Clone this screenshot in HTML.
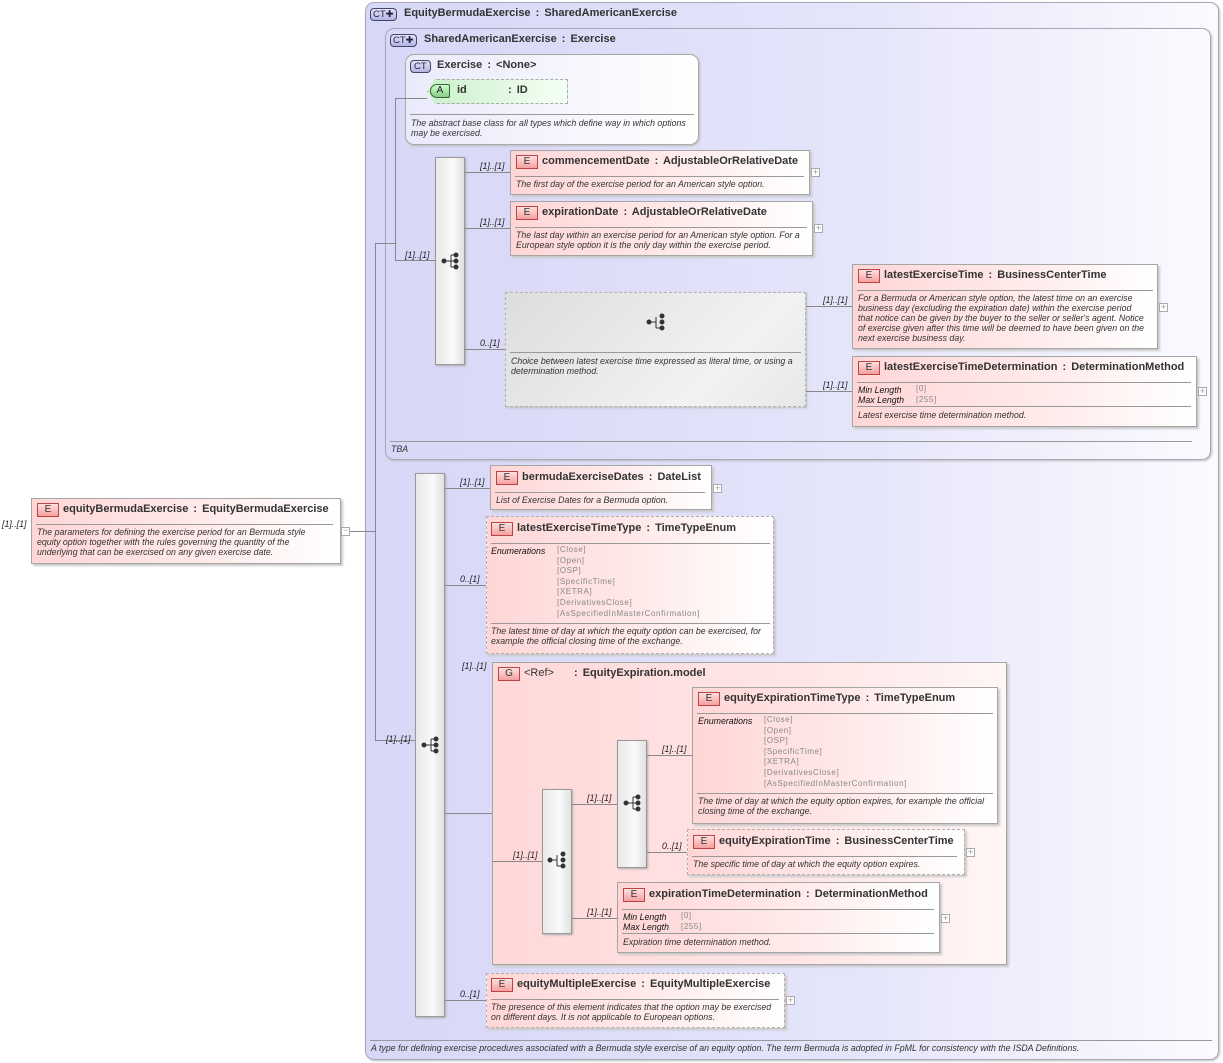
<!DOCTYPE html>
<html><head><meta charset="utf-8"><style>
*{margin:0;padding:0;box-sizing:border-box}
body{width:1223px;height:1063px;background:#fff;position:relative;overflow:hidden;font-family:"Liberation Sans",Arial,sans-serif;color:#222}
.a{position:absolute}
.ct{position:absolute;border:1px solid #a8a8b8;border-radius:9px;background:linear-gradient(90deg,#d7d7f7 0%,#e4e4fa 55%,#fafaff 100%);box-shadow:1px 1px 2px #bbb}
.ex{position:absolute;border:1px solid #aaa;border-radius:9px;background:linear-gradient(90deg,#eaeafb,#fff);box-shadow:1px 1px 2px #bbb}
.el{position:absolute;border:1px solid #a5a5a5;background:linear-gradient(90deg,#ffd6d6 0%,#ffe8e8 50%,#fff 100%);box-shadow:2px 2px 2px #c8c8c8}
.dash{border:1px dashed #b0b0b0}
.t{position:absolute;font-size:11px;font-weight:bold;white-space:nowrap;color:#333;word-spacing:2px}
.d{position:absolute;font-size:8.8px;font-style:italic;line-height:10px;color:#333;white-space:nowrap}
.hr{position:absolute;height:1px;background:#999}
.eb{position:absolute;width:22px;height:14px;border:1px solid #b44;background:linear-gradient(180deg,#ffe0e0,#f4a0a0);font-size:10px;text-align:center;line-height:12px;color:#333}
.ctb{position:absolute;width:27px;height:13px;border:1px solid #446;border-radius:4px;background:linear-gradient(#e4e4fa,#b4b4e4);font-size:9.5px;line-height:11px;padding-left:2px;color:#224}
.ln{position:absolute;background:#888}
.m{position:absolute;font-size:8.8px;font-style:italic;color:#222;white-space:nowrap}
.seq{position:absolute;border:1px solid #999;background:linear-gradient(90deg,#e8e8e8,#fafafa 60%,#e0e0e0);box-shadow:1px 1px 2px #aaa}
.pl{position:absolute;width:9px;height:9px;border:1px solid #aaa;background:#fff;font-size:9px;line-height:6px;text-align:center;color:#999}
.en{position:absolute;font-size:8px;color:#888;line-height:10.6px;letter-spacing:.6px;white-space:nowrap}
.k{position:absolute;font-size:8.8px;font-style:italic;color:#111;line-height:10px;white-space:nowrap}
</style></head><body>

<div class="ct" style="left:365px;top:2px;width:854px;height:1058px"></div>
<div class="ctb" style="left:370px;top:8px">CT✚</div>
<div class="t" style="left:404px;top:7px">EquityBermudaExercise : SharedAmericanExercise</div>
<div class="hr" style="left:370px;top:1040px;width:842px"></div>
<div class="d" style="left:371px;top:1043px">A type for defining exercise procedures associated with a Bermuda style exercise of an equity option. The term Bermuda is adopted in FpML for consistency with the ISDA Definitions.</div>

<div class="ct" style="left:385px;top:28px;width:826px;height:432px"></div>
<div class="ctb" style="left:390px;top:34px">CT✚</div>
<div class="t" style="left:424px;top:33px">SharedAmericanExercise : Exercise</div>
<div class="hr" style="left:390px;top:441px;width:802px"></div>
<div class="d" style="left:391px;top:444px">TBA</div>

<div class="ex" style="left:405px;top:54px;width:294px;height:91px"></div>
<div class="ctb" style="left:410px;top:60px;width:21px;padding-left:3px">CT</div>
<div class="t" style="left:437px;top:59px">Exercise : &lt;None&gt;</div>
<div class="a" style="left:427px;top:79px;width:141px;height:25px;border:1px dashed #aaa;background:linear-gradient(90deg,#ccf0cc,#f4fff4);clip-path:polygon(8px 0,100% 0,100% 100%,8px 100%,0 50%)"></div>
<div class="a" style="left:430px;top:84px;width:20px;height:14px;border:1px solid #363;border-radius:7px 2px 2px 7px;background:linear-gradient(#cfc,#8c8);font-size:10px;text-align:center;line-height:12px">A</div>
<div class="t" style="left:457px;top:84px">id</div>
<div class="t" style="left:508px;top:84px">: ID</div>
<div class="hr" style="left:410px;top:114px;width:284px"></div>
<div class="d" style="left:411px;top:118px">The abstract base class for all types which define way in which options<br>may be exercised.</div>

<div class="ln" style="left:395px;top:98px;width:1px;height:162px"></div>
<div class="ln" style="left:395px;top:98px;width:32px;height:1px"></div>
<div class="ln" style="left:395px;top:260px;width:40px;height:1px"></div>
<div class="m" style="left:405px;top:250px">[1]..[1]</div>
<div class="ln" style="left:375px;top:243px;width:1px;height:497px"></div>
<div class="ln" style="left:375px;top:243px;width:20px;height:1px"></div>
<div class="ln" style="left:375px;top:740px;width:40px;height:1px"></div>
<div class="m" style="left:386px;top:734px">[1]..[1]</div>
<div class="ln" style="left:346px;top:531px;width:29px;height:1px"></div>

<div class="seq" style="left:435px;top:157px;width:30px;height:208px"></div>
<svg class="a" style="left:441px;top:252px" width="20" height="18"><g fill="#333" stroke="#333"><circle cx="3" cy="9" r="2"/><line x1="3" y1="9" x2="10" y2="9"/><line x1="10" y1="3" x2="10" y2="15"/><line x1="10" y1="3" x2="15" y2="3"/><line x1="10" y1="15" x2="15" y2="15"/><line x1="10" y1="9" x2="15" y2="9"/><circle cx="15" cy="3" r="2"/><circle cx="15" cy="9" r="2"/><circle cx="15" cy="15" r="2"/></g></svg>
<div class="ln" style="left:465px;top:172px;width:45px;height:1px"></div>
<div class="m" style="left:480px;top:161px">[1]..[1]</div>
<div class="ln" style="left:465px;top:228px;width:45px;height:1px"></div>
<div class="m" style="left:480px;top:217px">[1]..[1]</div>
<div class="ln" style="left:465px;top:349px;width:40px;height:1px"></div>
<div class="m" style="left:480px;top:338px">0..[1]</div>

<div class="el" style="left:510px;top:150px;width:300px;height:45px"></div>
<div class="eb" style="left:516px;top:155px">E</div>
<div class="t" style="left:542px;top:155px">commencementDate : AdjustableOrRelativeDate</div>
<div class="hr" style="left:515px;top:176px;width:289px"></div>
<div class="d" style="left:516px;top:179px">The first day of the exercise period for an American style option.</div>
<div class="pl" style="left:811px;top:168px">+</div>

<div class="el" style="left:510px;top:201px;width:303px;height:55px"></div>
<div class="eb" style="left:516px;top:206px">E</div>
<div class="t" style="left:542px;top:206px">expirationDate : AdjustableOrRelativeDate</div>
<div class="hr" style="left:515px;top:227px;width:292px"></div>
<div class="d" style="left:516px;top:230px">The last day within an exercise period for an American style option. For a<br>European style option it is the only day within the exercise period.</div>
<div class="pl" style="left:814px;top:224px">+</div>

<div class="a dash" style="left:505px;top:292px;width:301px;height:115px;background:linear-gradient(135deg,#ddd,#f2f2f2 70%,#e8e8e8);box-shadow:1px 1px 2px #bbb"></div>
<svg class="a" style="left:646px;top:313px" width="22" height="20"><g fill="#333" stroke="#333"><circle cx="3" cy="9" r="2"/><line x1="3" y1="9" x2="10" y2="9"/><line x1="10" y1="4" x2="10" y2="15"/><line x1="10" y1="15" x2="16" y2="15"/><circle cx="16" cy="3" r="2"/><circle cx="16" cy="9" r="2"/><circle cx="16" cy="15" r="2"/></g></svg>
<div class="hr" style="left:510px;top:352px;width:291px"></div>
<div class="d" style="left:511px;top:356px">Choice between latest exercise time expressed as literal time, or using a<br>determination method.</div>
<div class="ln" style="left:806px;top:306px;width:46px;height:1px"></div>
<div class="m" style="left:823px;top:295px">[1]..[1]</div>
<div class="ln" style="left:806px;top:391px;width:46px;height:1px"></div>
<div class="m" style="left:823px;top:380px">[1]..[1]</div>

<div class="el" style="left:852px;top:264px;width:306px;height:85px"></div>
<div class="eb" style="left:858px;top:269px">E</div>
<div class="t" style="left:884px;top:269px">latestExerciseTime : BusinessCenterTime</div>
<div class="hr" style="left:857px;top:290px;width:296px"></div>
<div class="d" style="left:858px;top:293px">For a Bermuda or American style option, the latest time on an exercise<br>business day (excluding the expiration date) within the exercise period<br>that notice can be given by the buyer to the seller or seller's agent. Notice<br>of exercise given after this time will be deemed to have been given on the<br>next exercise business day.</div>
<div class="pl" style="left:1159px;top:303px">+</div>

<div class="el" style="left:852px;top:356px;width:345px;height:71px"></div>
<div class="eb" style="left:858px;top:361px">E</div>
<div class="t" style="left:884px;top:361px">latestExerciseTimeDetermination : DeterminationMethod</div>
<div class="hr" style="left:857px;top:382px;width:334px"></div>
<div class="k" style="left:858px;top:385px">Min Length<br>Max Length</div>
<div class="en" style="left:916px;top:384px">[0]<br>[255]</div>
<div class="hr" style="left:857px;top:406px;width:334px"></div>
<div class="d" style="left:858px;top:410px">Latest exercise time determination method.</div>
<div class="pl" style="left:1198px;top:387px">+</div>

<div class="m" style="left:2px;top:519px">[1]..[1]</div>
<div class="el" style="left:31px;top:498px;width:310px;height:66px"></div>
<div class="eb" style="left:37px;top:503px">E</div>
<div class="t" style="left:63px;top:503px">equityBermudaExercise : EquityBermudaExercise</div>
<div class="hr" style="left:36px;top:524px;width:297px"></div>
<div class="d" style="left:37px;top:527px">The parameters for defining the exercise period for an Bermuda style<br>equity option together with the rules governing the quantity of the<br>underlying that can be exercised on any given exercise date.</div>
<div class="pl" style="left:341px;top:527px;line-height:5px">−</div>

<div class="seq" style="left:415px;top:473px;width:30px;height:544px"></div>
<svg class="a" style="left:421px;top:736px" width="20" height="18"><g fill="#333" stroke="#333"><circle cx="3" cy="9" r="2"/><line x1="3" y1="9" x2="10" y2="9"/><line x1="10" y1="3" x2="10" y2="15"/><line x1="10" y1="3" x2="15" y2="3"/><line x1="10" y1="15" x2="15" y2="15"/><line x1="10" y1="9" x2="15" y2="9"/><circle cx="15" cy="3" r="2"/><circle cx="15" cy="9" r="2"/><circle cx="15" cy="15" r="2"/></g></svg>
<div class="ln" style="left:445px;top:488px;width:45px;height:1px"></div>
<div class="m" style="left:460px;top:477px">[1]..[1]</div>
<div class="ln" style="left:445px;top:585px;width:41px;height:1px"></div>
<div class="m" style="left:460px;top:574px">0..[1]</div>
<div class="ln" style="left:445px;top:813px;width:47px;height:1px"></div>
<div class="m" style="left:462px;top:661px">[1]..[1]</div>
<div class="ln" style="left:445px;top:1000px;width:41px;height:1px"></div>
<div class="m" style="left:460px;top:989px">0..[1]</div>

<div class="el" style="left:490px;top:465px;width:222px;height:45px"></div>
<div class="eb" style="left:496px;top:471px">E</div>
<div class="t" style="left:522px;top:471px">bermudaExerciseDates : DateList</div>
<div class="hr" style="left:495px;top:492px;width:210px"></div>
<div class="d" style="left:496px;top:495px">List of Exercise Dates for a Bermuda option.</div>
<div class="pl" style="left:713px;top:484px">+</div>

<div class="el dash" style="left:486px;top:516px;width:288px;height:138px"></div>
<div class="eb" style="left:491px;top:522px">E</div>
<div class="t" style="left:517px;top:522px">latestExerciseTimeType : TimeTypeEnum</div>
<div class="hr" style="left:491px;top:543px;width:279px"></div>
<div class="k" style="left:491px;top:546px">Enumerations</div>
<div class="en" style="left:557px;top:545px">[Close]<br>[Open]<br>[OSP]<br>[SpecificTime]<br>[XETRA]<br>[DerivativesClose]<br>[AsSpecifiedInMasterConfirmation]</div>
<div class="hr" style="left:491px;top:623px;width:279px"></div>
<div class="d" style="left:491px;top:626px">The latest time of day at which the equity option can be exercised, for<br>example the official closing time of the exchange.</div>

<div class="el" style="left:492px;top:662px;width:515px;height:303px;background:linear-gradient(90deg,#ffd8d8,#ffe6e6 60%,#fff6f6)"></div>
<div class="eb" style="left:498px;top:667px">G</div>
<div class="t" style="left:524px;top:667px;font-weight:normal">&lt;Ref&gt;</div>
<div class="t" style="left:574px;top:667px">: EquityExpiration.model</div>

<div class="ln" style="left:492px;top:861px;width:50px;height:1px"></div>
<div class="m" style="left:513px;top:850px">[1]..[1]</div>
<div class="seq" style="left:542px;top:789px;width:30px;height:145px"></div>
<svg class="a" style="left:547px;top:851px" width="22" height="20"><g fill="#333" stroke="#333"><circle cx="3" cy="9" r="2"/><line x1="3" y1="9" x2="10" y2="9"/><line x1="10" y1="4" x2="10" y2="15"/><line x1="10" y1="15" x2="16" y2="15"/><circle cx="16" cy="3" r="2"/><circle cx="16" cy="9" r="2"/><circle cx="16" cy="15" r="2"/></g></svg>
<div class="ln" style="left:572px;top:804px;width:45px;height:1px"></div>
<div class="m" style="left:587px;top:793px">[1]..[1]</div>
<div class="ln" style="left:572px;top:918px;width:45px;height:1px"></div>
<div class="m" style="left:587px;top:907px">[1]..[1]</div>

<div class="seq" style="left:617px;top:740px;width:30px;height:128px"></div>
<svg class="a" style="left:623px;top:794px" width="20" height="18"><g fill="#333" stroke="#333"><circle cx="3" cy="9" r="2"/><line x1="3" y1="9" x2="10" y2="9"/><line x1="10" y1="3" x2="10" y2="15"/><line x1="10" y1="3" x2="15" y2="3"/><line x1="10" y1="15" x2="15" y2="15"/><line x1="10" y1="9" x2="15" y2="9"/><circle cx="15" cy="3" r="2"/><circle cx="15" cy="9" r="2"/><circle cx="15" cy="15" r="2"/></g></svg>
<div class="ln" style="left:647px;top:755px;width:45px;height:1px"></div>
<div class="m" style="left:662px;top:744px">[1]..[1]</div>
<div class="ln" style="left:647px;top:852px;width:40px;height:1px"></div>
<div class="m" style="left:662px;top:841px">0..[1]</div>

<div class="el" style="left:692px;top:687px;width:306px;height:137px"></div>
<div class="eb" style="left:698px;top:692px">E</div>
<div class="t" style="left:724px;top:692px">equityExpirationTimeType : TimeTypeEnum</div>
<div class="hr" style="left:697px;top:713px;width:296px"></div>
<div class="k" style="left:698px;top:716px">Enumerations</div>
<div class="en" style="left:764px;top:715px">[Close]<br>[Open]<br>[OSP]<br>[SpecificTime]<br>[XETRA]<br>[DerivativesClose]<br>[AsSpecifiedInMasterConfirmation]</div>
<div class="hr" style="left:697px;top:793px;width:296px"></div>
<div class="d" style="left:698px;top:796px">The time of day at which the equity option expires, for example the official<br>closing time of the exchange.</div>

<div class="el dash" style="left:687px;top:829px;width:278px;height:46px"></div>
<div class="eb" style="left:693px;top:835px">E</div>
<div class="t" style="left:719px;top:835px">equityExpirationTime : BusinessCenterTime</div>
<div class="hr" style="left:692px;top:856px;width:265px"></div>
<div class="d" style="left:693px;top:859px">The specific time of day at which the equity option expires.</div>
<div class="pl" style="left:966px;top:848px">+</div>

<div class="el" style="left:617px;top:882px;width:323px;height:71px"></div>
<div class="eb" style="left:623px;top:888px">E</div>
<div class="t" style="left:649px;top:888px">expirationTimeDetermination : DeterminationMethod</div>
<div class="hr" style="left:622px;top:909px;width:312px"></div>
<div class="k" style="left:623px;top:912px">Min Length<br>Max Length</div>
<div class="en" style="left:681px;top:911px">[0]<br>[255]</div>
<div class="hr" style="left:622px;top:933px;width:312px"></div>
<div class="d" style="left:623px;top:937px">Expiration time determination method.</div>
<div class="pl" style="left:941px;top:914px">+</div>

<div class="el dash" style="left:486px;top:973px;width:299px;height:55px"></div>
<div class="eb" style="left:491px;top:978px">E</div>
<div class="t" style="left:517px;top:978px">equityMultipleExercise : EquityMultipleExercise</div>
<div class="hr" style="left:491px;top:999px;width:288px"></div>
<div class="d" style="left:491px;top:1002px">The presence of this element indicates that the option may be exercised<br>on different days. It is not applicable to European options.</div>
<div class="pl" style="left:786px;top:996px">+</div>

</body></html>
